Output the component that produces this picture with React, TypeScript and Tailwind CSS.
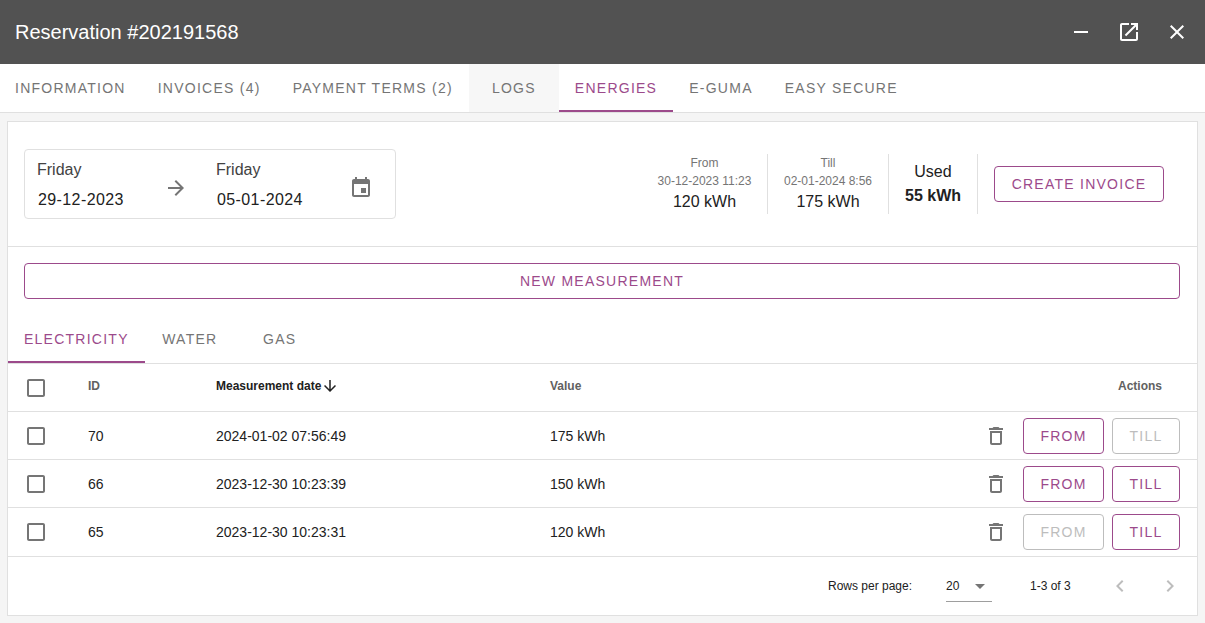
function Icon({ d, className }: { d: string; className: string }) {
  return (
    <svg viewBox="0 0 24 24" className={className} fill="currentColor">
      <path d={d} />
    </svg>
  );
}
const icons = {
  remove: "M19 13H5v-2h14v2z",
  open: "M19 19H5V5h7V3H5c-1.11 0-2 .9-2 2v14c0 1.1.89 2 2 2h14c1.1 0 2-.9 2-2v-7h-2v7zM14 3v2h3.59l-9.83 9.83 1.41 1.41L19 6.41V10h2V3h-7z",
  close: "M19 6.41L17.59 5 12 10.59 6.41 5 5 6.41 10.59 12 5 17.59 6.41 19 12 13.41 17.59 19 19 17.59 13.41 12z",
  event: "M17 12h-5v5h5v-5zM16 1v2H8V1H6v2H5c-1.11 0-1.99.9-1.99 2L3 19c0 1.1.89 2 2 2h14c1.1 0 2-.9 2-2V5c0-1.1-.9-2-2-2h-1V1h-2zm3 18H5V8h14v11z",
  trash: "M6 19c0 1.1.9 2 2 2h8c1.1 0 2-.9 2-2V7H6v12zM8 9h8v10H8V9zm7.5-5l-1-1h-5l-1 1H5v2h14V4z",
  check: "M19 5v14H5V5h14m0-2H5c-1.1 0-2 .9-2 2v14c0 1.1.9 2 2 2h14c1.1 0 2-.9 2-2V5c0-1.1-.9-2-2-2z",
  forward: "M12 4l-1.41 1.41L16.17 11H4v2h12.17l-5.58 5.59L12 20l8-8z",
  down: "M20 12l-1.41-1.41L13 16.17V4h-2v12.17l-5.58-5.59L4 12l8 8 8-8z",
  left: "M15.41 7.41L14 6l-6 6 6 6 1.41-1.41L10.83 12z",
  right: "M10 6L8.59 7.41 13.17 12l-4.58 4.59L10 18l6-6z",
  drop: "M7 10l5 5 5-5z",
};

function Tab({ label, active, hover, className = "" }: { label: string; active?: boolean; hover?: boolean; className?: string }) {
  return (
    <div
      className={`relative flex h-12 min-w-[90px] items-center justify-center px-4 text-sm tracking-[1.25px] ${active ? "text-[#9c4a8b]" : "text-[#757575]"} ${hover ? "bg-[#f7f7f7]" : ""} ${className}`}
    >
      {label}
      {active && <span className="absolute right-0 bottom-0 left-0 h-0.5 bg-[#9c4a8b]" />}
    </div>
  );
}

function Btn({ label, disabled, className = "" }: { label: string; disabled?: boolean; className?: string }) {
  return (
    <div
      className={`flex h-9 items-center justify-center rounded border text-sm tracking-[1.25px] ${disabled ? "border-[#bdbdbd] text-[#bdbdbd]" : "border-[#9c4a8b] text-[#9c4a8b]"} ${className}`}
    >
      {label}
    </div>
  );
}

const grid = "grid grid-cols-[80px_128px_334px_1fr] items-center";

function Row({ id, date, value, fromOff, tillOff, last }: { id: string; date: string; value: string; fromOff?: boolean; tillOff?: boolean; last?: boolean }) {
  return (
    <div className={`${grid} border-b border-[#e0e0e0] text-sm text-[#212121] ${last ? "h-[49px]" : "h-12"}`}>
      <div className="pl-4">
        <Icon d={icons.check} className="h-6 w-6 text-[#757575]" />
      </div>
      <div>{id}</div>
      <div>{date}</div>
      <div className="flex items-center justify-between pr-[17px]">
        <span>{value}</span>
        <div className="flex items-center">
          <Icon d={icons.trash} className="mr-[15px] h-6 w-6 text-[#757575]" />
          <Btn label="FROM" disabled={fromOff} className="w-[81px]" />
          <Btn label="TILL" disabled={tillOff} className="ml-2 w-[68px]" />
        </div>
      </div>
    </div>
  );
}

function Stat({ top, mid, val, className }: { top: string; mid: string; val: string; className: string }) {
  return (
    <div className={`flex h-[60px] flex-col items-center border-r border-[#e0e0e0] ${className}`}>
      <div className="text-xs leading-[18px] text-[#757575]">{top}</div>
      <div className="text-xs leading-[18px] text-[#757575]">{mid}</div>
      <div className="mt-0.5 text-base leading-5 text-[#212121]">{val}</div>
    </div>
  );
}

export default function App() {
  return (
    <div className="h-[623px] overflow-hidden bg-[#f5f5f5] font-['Liberation_Sans',sans-serif]">
      <div className="flex h-16 items-center justify-between bg-[#525252] pr-4 pl-[15px] text-white">
        <div className="text-xl">Reservation #202191568</div>
        <div className="flex items-center gap-6">
          <Icon d={icons.remove} className="h-6 w-6" />
          <Icon d={icons.open} className="h-6 w-6" />
          <Icon d={icons.close} className="h-6 w-6" />
        </div>
      </div>
      <div className="flex h-[49px] border-b border-[#e0e0e0] bg-white">
        <Tab label="INFORMATION" className="pl-[15px]" />
        <Tab label="INVOICES (4)" />
        <Tab label="PAYMENT TERMS (2)" />
        <Tab label="LOGS" hover />
        <Tab label="ENERGIES" active />
        <Tab label="E-GUMA" />
        <Tab label="EASY SECURE" />
      </div>
      <div className="mx-[7px] mt-2 h-[495px] border border-[#e0e0e0] bg-white">
        <div className="flex h-[125px] items-center justify-between border-b border-[#e0e0e0] pr-[33px] pl-4">
          <div className="flex h-[70px] w-[372px] items-center rounded border border-[#e0e0e0]">
            <div className="ml-3 w-[127px]">
              <div className="mt-0.5 text-base leading-5 text-[#424242]">Friday</div>
              <div className="mt-2.5 ml-px text-base leading-5 tracking-[0.4px] text-[#212121]">29-12-2023</div>
            </div>
            <Icon d={icons.forward} className="mt-2 h-6 w-6 text-[#757575]" />
            <div className="ml-7 w-[133px]">
              <div className="mt-0.5 text-base leading-5 text-[#424242]">Friday</div>
              <div className="mt-2.5 ml-px text-base leading-5 tracking-[0.4px] text-[#212121]">05-01-2024</div>
            </div>
            <Icon d={icons.event} className="mt-2 h-6 w-6 text-[#757575]" />
          </div>
          <div className="flex items-center">
            <Stat top="From" mid="30-12-2023 11:23" val="120 kWh" className="w-[111px] pr-[15px]" />
            <Stat top="Till" mid="02-01-2024 8:56" val="175 kWh" className="w-[121px]" />
            <div className="flex h-[60px] w-[89px] flex-col items-center border-r border-[#e0e0e0] pt-2 text-base leading-5">
              <div className="text-[#212121]">Used</div>
              <div className="mt-1 font-bold text-[#212121]">55 kWh</div>
            </div>
            <Btn label="CREATE INVOICE" className="ml-4 w-[170px]" />
          </div>
        </div>
        <div className="pt-4 pr-[17px] pl-4">
          <Btn label="NEW MEASUREMENT" />
        </div>
        <div className="mt-4 flex h-[49px] border-b border-[#e0e0e0]">
          <Tab label="ELECTRICITY" active />
          <Tab label="WATER" />
          <Tab label="GAS" />
        </div>
        <div className={`${grid} h-12 border-b border-[#e0e0e0] text-xs font-bold text-[#616161]`}>
          <div className="pl-4">
            <Icon d={icons.check} className="h-6 w-6 text-[#757575]" />
          </div>
          <div className="pb-1">ID</div>
          <div className="flex items-center pb-1 text-[#212121]">
            Measurement date
            <Icon d={icons.down} className="h-[18px] w-[18px] text-[#212121]" />
          </div>
          <div className="flex justify-between pr-[35px] pb-1">
            <span>Value</span>
            <span>Actions</span>
          </div>
        </div>
        <Row id="70" date="2024-01-02 07:56:49" value="175 kWh" tillOff />
        <Row id="66" date="2023-12-30 10:23:39" value="150 kWh" />
        <Row id="65" date="2023-12-30 10:23:31" value="120 kWh" fromOff last />
        <div className="flex h-[58px] items-center text-xs text-[#212121]">
          <div className="ml-[820px] w-[118px]">Rows per page:</div>
          <div className="flex h-[32px] w-[46px] items-center justify-between border-b border-[#9e9e9e]">
            <span>20</span>
            <Icon d={icons.drop} className="h-6 w-6 text-[#757575]" />
          </div>
          <div className="ml-[38px] w-[38px] whitespace-nowrap">1-3 of 3</div>
          <Icon d={icons.left} className="ml-[40px] h-6 w-6 text-[#bdbdbd]" />
          <Icon d={icons.right} className="ml-[26px] h-6 w-6 text-[#bdbdbd]" />
        </div>
      </div>
    </div>
  );
}
